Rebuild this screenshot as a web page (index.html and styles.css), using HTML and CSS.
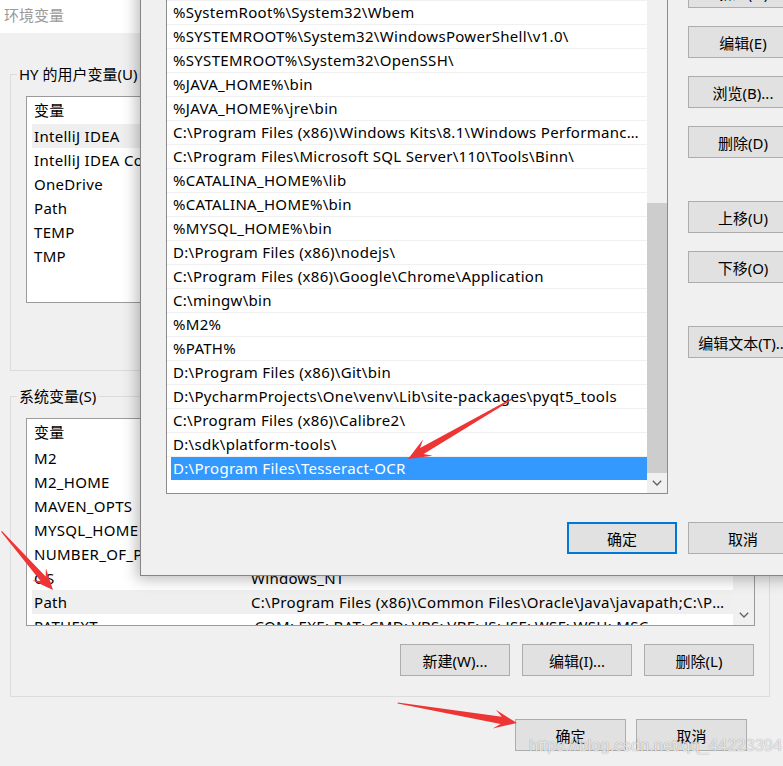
FILE: index.html
```html
<!DOCTYPE html>
<html lang="zh-CN">
<head>
<meta charset="utf-8">
<title>环境变量</title>
<link rel="stylesheet" href="styles.css">
</head>
<body>
<div class="screen">
  <div class="win">
    <div class="titlebar">环境变量</div>
    <div class="win-body">
      <fieldset class="group group-user">
        <legend>HY 的用户变量(U)</legend>
        <div class="listview lv-user">
          <div class="lv-body">
            <div class="lv-head"><span class="c1">变量</span><span class="c2">值</span></div>
            <div class="lv-row isel"><span class="c1">IntelliJ IDEA</span><span class="c2">D:\Program Files\JetBrains\IntelliJ IDEA 2019.3\bin;</span></div>
            <div class="lv-row"><span class="c1">IntelliJ IDEA Community Edition</span><span class="c2">D:\Program Files\JetBrains\IntelliJ IDEA Community Edition\bin;</span></div>
            <div class="lv-row"><span class="c1">OneDrive</span><span class="c2">C:\Users\HY\OneDrive</span></div>
            <div class="lv-row"><span class="c1">Path</span><span class="c2">C:\Users\HY\AppData\Local\Microsoft\WindowsApps;</span></div>
            <div class="lv-row"><span class="c1">TEMP</span><span class="c2">%USERPROFILE%\AppData\Local\Temp</span></div>
            <div class="lv-row"><span class="c1">TMP</span><span class="c2">%USERPROFILE%\AppData\Local\Temp</span></div>
          </div>
        </div>
        <div class="btn-row">
          <button class="btn">新建(N)...</button>
          <button class="btn">编辑(E)...</button>
          <button class="btn">删除(D)</button>
        </div>
      </fieldset>
      <fieldset class="group group-sys">
        <legend>系统变量(S)</legend>
        <div class="listview lv-sys">
          <div class="lv-body">
            <div class="lv-head"><span class="c1">变量</span><span class="c2">值</span></div>
            <div class="lv-row"><span class="c1">M2</span><span class="c2">%M2_HOME%\bin</span></div>
            <div class="lv-row"><span class="c1">M2_HOME</span><span class="c2">D:\apache-maven-3.6.3</span></div>
            <div class="lv-row"><span class="c1">MAVEN_OPTS</span><span class="c2">-Xms128m -Xmx512m</span></div>
            <div class="lv-row"><span class="c1">MYSQL_HOME</span><span class="c2">D:\mysql-8.0.19-winx64</span></div>
            <div class="lv-row"><span class="c1">NUMBER_OF_PROCESSORS</span><span class="c2">8</span></div>
            <div class="lv-row"><span class="c1">OS</span><span class="c2">Windows_NT</span></div>
            <div class="lv-row isel"><span class="c1">Path</span><span class="c2">C:\Program Files (x86)\Common Files\Oracle\Java\javapath;C:\Program Files (x86)\Intel\iCLS Client\;C:\Program Files\Intel\iCLS Client\</span></div>
            <div class="lv-row"><span class="c1">PATHEXT</span><span class="c2">.COM;.EXE;.BAT;.CMD;.VBS;.VBE;.JS;.JSE;.WSF;.WSH;.MSC</span></div>
          </div>
          <div class="vscroll">
            <div class="track"></div>
            <div class="sarrow"><svg width="10" height="6" viewBox="0 0 10 6"><polyline points="0.8,0.8 5,5 9.2,0.8" fill="none" stroke="#606060" stroke-width="1.3"/></svg></div>
          </div>
        </div>
        <div class="btn-row">
          <button class="btn">新建(W)...</button>
          <button class="btn">编辑(I)...</button>
          <button class="btn">删除(L)</button>
        </div>
      </fieldset>
      <div class="btn-row main-btns">
        <button class="btn wide">确定</button>
        <button class="btn wide">取消</button>
      </div>
    </div>
  </div>

  <div class="dialog">
    <div class="dlg-main">
      <div class="dlg-list">
        <div class="dlg-items">
          <div class="item"><span class="txt">%SystemRoot%</span></div>
          <div class="item"><span class="txt">%SystemRoot%\System32\Wbem</span></div>
          <div class="item"><span class="txt">%SYSTEMROOT%\System32\WindowsPowerShell\v1.0\</span></div>
          <div class="item"><span class="txt">%SYSTEMROOT%\System32\OpenSSH\</span></div>
          <div class="item"><span class="txt">%JAVA_HOME%\bin</span></div>
          <div class="item"><span class="txt">%JAVA_HOME%\jre\bin</span></div>
          <div class="item"><span class="txt">C:\Program Files (x86)\Windows Kits\8.1\Windows Performance Toolkit\</span></div>
          <div class="item"><span class="txt">C:\Program Files\Microsoft SQL Server\110\Tools\Binn\</span></div>
          <div class="item"><span class="txt">%CATALINA_HOME%\lib</span></div>
          <div class="item"><span class="txt">%CATALINA_HOME%\bin</span></div>
          <div class="item"><span class="txt">%MYSQL_HOME%\bin</span></div>
          <div class="item"><span class="txt">D:\Program Files (x86)\nodejs\</span></div>
          <div class="item"><span class="txt">C:\Program Files (x86)\Google\Chrome\Application</span></div>
          <div class="item"><span class="txt">C:\mingw\bin</span></div>
          <div class="item"><span class="txt">%M2%</span></div>
          <div class="item"><span class="txt">%PATH%</span></div>
          <div class="item"><span class="txt">D:\Program Files (x86)\Git\bin</span></div>
          <div class="item"><span class="txt">D:\PycharmProjects\One\venv\Lib\site-packages\pyqt5_tools</span></div>
          <div class="item"><span class="txt">C:\Program Files (x86)\Calibre2\</span></div>
          <div class="item"><span class="txt">D:\sdk\platform-tools\</span></div>
          <div class="item sel"><span class="txt">D:\Program Files\Tesseract-OCR</span></div>
        </div>
        <div class="vscroll dlg-scroll">
          <div class="sarrow"></div>
          <div class="track"><div class="thumb"></div></div>
          <div class="sarrow"><svg width="10" height="6" viewBox="0 0 10 6"><polyline points="0.8,0.8 5,5 9.2,0.8" fill="none" stroke="#606060" stroke-width="1.3"/></svg></div>
        </div>
      </div>
      <div class="dlg-side">
        <button class="btn">新建(N)</button>
        <button class="btn">编辑(E)</button>
        <button class="btn">浏览(B)...</button>
        <button class="btn">删除(D)</button>
        <button class="btn gap">上移(U)</button>
        <button class="btn">下移(O)</button>
        <button class="btn gap">编辑文本(T)...</button>
      </div>
    </div>
    <div class="btn-row dlg-btns">
      <button class="btn default">确定</button>
      <button class="btn">取消</button>
    </div>
  </div>

  <div class="watermark">https://blog.csdn.net/qq_44223394</div>

  <svg class="arrows" width="783" height="766" viewBox="0 0 783 766">
    <g fill="#ee3535">
      <polygon transform="translate(408 459) rotate(150)" points="-120,-0.6 -16,-3.6 -23,-9.5 0,0 -23,9.5 -16,3.6 -120,0.6"/>
      <polygon transform="translate(53 590) rotate(48.7)" points="-78,-0.6 -15,-3.4 -21,-9 0,0 -21,9 -15,3.4 -78,0.6"/>
      <polygon transform="translate(517 723) rotate(9.5)" points="-121,-0.6 -16,-3.6 -23,-9.5 0,0 -23,9.5 -16,3.6 -121,0.6"/>
    </g>
  </svg>
</div>
</body>
</html>
```

FILE: styles.css
```css
* { box-sizing: border-box; margin: 0; padding: 0; }
html, body { width: 783px; height: 766px; overflow: hidden; }
body {
  background: #f0f0f0;
  font-family: "Noto Sans", "Noto Sans CJK SC", sans-serif;
  font-size: 15px;
  color: #000;
}
.screen { position: relative; width: 783px; height: 766px; overflow: hidden; }

/* main window */
.win { width: 783px; height: 766px; background: #f0f0f0; }
.titlebar {
  height: 33px;
  background: #fff;
  color: #9a9a9a;
  padding-left: 4px;
  line-height: 30px;
}
.win-body { padding: 0 13px 0 10px; }

.group {
  min-width: 0;
  border: 1px solid #dcdcdc;
  padding: 0 14px 20px 15px;
}
.group-user { margin-top: 31px; padding-bottom: 17px; }
.group-sys { margin-top: 15px; }
legend {
  margin-left: -9px;
  padding: 0 2px;
  line-height: 20px;
  height: 20px;
}

.listview {
  margin-top: 12px;
  border: 1px solid #9a9a9a;
  background: #fff;
  display: flex;
  overflow: hidden;
}
.lv-user { height: 207px; }
.lv-sys { height: 208px; }
.lv-body { flex: 1; padding-left: 5px; overflow: hidden; min-width: 0; }
.lv-head, .lv-row { display: flex; white-space: nowrap; letter-spacing: 0.3px; }
.lv-head { height: 27px; line-height: 27px; }
.lv-row { height: 24px; line-height: 24px; }
.lv-row.isel { background: #efefef; }
.c1 {
  width: 217px;
  flex: none;
  padding-left: 2px;
  overflow: hidden;
  text-overflow: ellipsis;
}
.c2 {
  flex: 1;
  min-width: 0;
  padding-left: 2px;
  padding-right: 4px;
  overflow: hidden;
  text-overflow: ellipsis;
}

.vscroll {
  width: 21px;
  flex: none;
  background: #f0f0f0;
  display: flex;
  flex-direction: column;
}
.track { flex: 1; display: flex; flex-direction: column; justify-content: flex-end; }
.sarrow {
  height: 21px;
  display: flex;
  align-items: center;
  justify-content: center;
}

.btn-row {
  display: flex;
  justify-content: flex-end;
  gap: 12px;
  margin-top: 18px;
  padding-right: 1px;
}
.btn {
  width: 110px;
  height: 32px;
  background: #e1e1e1;
  border: 1px solid #adadad;
  font-family: inherit;
  font-size: 15px;
  color: #000;
  white-space: nowrap;
  overflow: hidden;
}
.btn.wide { width: 111px; }
.main-btns { margin-top: 22px; gap: 10px; padding-right: 23px; }

/* edit dialog */
.dialog {
  position: absolute;
  left: 140px;
  top: -41px;
  width: 679px;
  height: 617px;
  background: #f0f0f0;
  border: 1px solid #858585;
  box-shadow: 0 0 14px 3px rgba(0, 0, 0, 0.28);
  padding: 16px 20px 21px 25px;
  display: flex;
  flex-direction: column;
}
.dlg-main { display: flex; gap: 20px; }
.dlg-list {
  width: 502px;
  height: 518px;
  border: 1px solid #8c8c8c;
  background: #fff;
  display: flex;
}
.dlg-items { width: 480px; flex: none; overflow: hidden; }
.item {
  height: 24px;
  border-bottom: 1px solid #f0f0f0;
  padding-left: 4px;
  display: flex;
}
.item .txt {
  flex: 1;
  min-width: 0;
  padding-left: 2px;
  padding-right: 6px;
  line-height: 23px;
  letter-spacing: 0.3px;
  white-space: nowrap;
  overflow: hidden;
  text-overflow: ellipsis;
}
.item.sel { border-bottom-color: #fff; }
.item.sel .txt { background: #3399ff; color: #fff; }
.dlg-scroll { width: 20px; }
.dlg-scroll .sarrow { height: 20px; }
.thumb { height: 270px; background: #cdcdcd; }

.dlg-side { width: 110px; display: flex; flex-direction: column; }
.dlg-side .btn { margin-top: 18px; }
.dlg-side .btn:first-child { margin-top: 0; }
.dlg-side .btn.gap { margin-top: 43px; }

.dlg-btns { margin-top: 28px; gap: 11px; padding-right: 0; }
.btn.default { border: 2px solid #0078d7; }

/* overlays */
.watermark {
  position: absolute;
  left: 529px;
  top: 736px;
  font-family: "Liberation Sans", sans-serif;
  font-size: 16.5px;
  color: rgba(255, 255, 255, 0.8);
  text-shadow: 0 0 1px rgba(0, 0, 0, 0.45);
  white-space: nowrap;
}
.arrows { position: absolute; left: 0; top: 0; pointer-events: none; }
```
